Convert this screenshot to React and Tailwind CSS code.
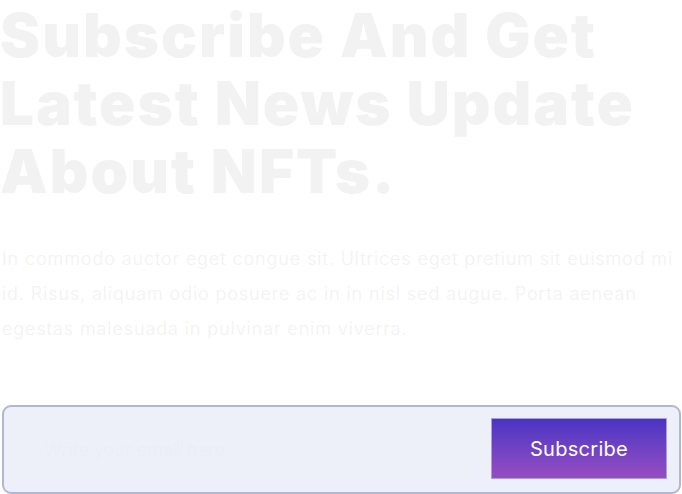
import React from 'react';

const Newsletter = () => {
  return (
    <div className="w-[682px] h-[494px] bg-white overflow-hidden font-['Inter',sans-serif]">
      <h1 className="text-[60px] leading-[68px] font-black text-[#f2f2f2] tracking-[2px] pt-[1px]">
        Subscribe And Get Latest News Update About NFTs.
      </h1>

      <p className="mt-[36px] text-[18px] leading-[35px] text-[#f2f2f2] font-light tracking-[0.9px] pl-[2px]">
        In commodo auctor eget congue sit. Ultrices eget pretium sit euismod mi id. Risus, aliquam odio posuere ac in in nisl sed augue. Porta aenean egestas malesuada in pulvinar enim viverra.
      </p>

      {/* Subscribe form */}
      <form className="mt-[59px] ml-[2px] mr-[1px] h-[89px] flex items-center justify-between rounded-[9px] border-2 border-[#b3b6d3] bg-[#eef0f9] pl-[40px] pr-[12px]">
        <input
          type="email"
          placeholder="Write your email here"
          className="flex-1 bg-transparent text-[18px] outline-none placeholder:text-[#eceef6]"
        />
        <button
          type="button"
          className="w-[176px] h-[61px] mt-[-2px] border border-[#a99ee0] bg-gradient-to-b from-[#4a33c4] to-[#974cc1] text-white text-[20px] font-normal tracking-[0.3px]"
        >
          Subscribe
        </button>
      </form>
    </div>
  );
};

export default function App() {
  return <Newsletter />;
}
